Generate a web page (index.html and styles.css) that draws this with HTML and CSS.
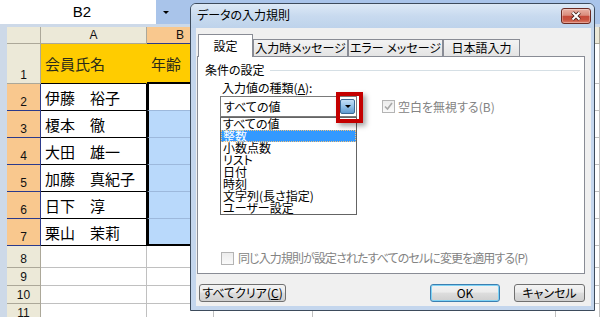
FILE: index.html
```html
<!DOCTYPE html>
<html lang="ja">
    <head>
        <meta charset="utf-8" />
        <title>データの入力規則</title>
        <link rel="stylesheet" href="styles.css">
    </head>
    <body>
        <div class="namebar">
            <div class="namebox">B2</div>
            <div class="namedrop"><span class="tri"></span></div>
        </div>

        <div class="sheet">
            <div class="corner"></div><div class="ch">A</div><div class="ch on">B</div><div class="ch">C</div><div class="ch">D</div><div class="ch">E</div>

            <div class="rh">1</div><div class="c yel a1">会員氏名</div><div class="c yel b1">年齢</div><div class="c"></div><div class="c"></div><div class="c"></div>
            <div class="rh on">2</div><div class="c name">伊藤　裕子</div><div class="c pick act"></div><div class="c"></div><div class="c"></div><div class="c"></div>
            <div class="rh on">3</div><div class="c name">榎本　徹</div><div class="c pick"></div><div class="c"></div><div class="c"></div><div class="c"></div>
            <div class="rh on">4</div><div class="c name">大田　雄一</div><div class="c pick"></div><div class="c"></div><div class="c"></div><div class="c"></div>
            <div class="rh on">5</div><div class="c name">加藤　真紀子</div><div class="c pick"></div><div class="c"></div><div class="c"></div><div class="c"></div>
            <div class="rh on">6</div><div class="c name">日下　淳</div><div class="c pick"></div><div class="c"></div><div class="c"></div><div class="c"></div>
            <div class="rh on">7</div><div class="c name">栗山　茉莉</div><div class="c pick last"></div><div class="c"></div><div class="c"></div><div class="c"></div>
            <div class="rh">8</div><div class="c"></div><div class="c"></div><div class="c"></div><div class="c"></div><div class="c"></div>
            <div class="rh">9</div><div class="c"></div><div class="c"></div><div class="c"></div><div class="c"></div><div class="c"></div>
            <div class="rh">10</div><div class="c"></div><div class="c"></div><div class="c"></div><div class="c"></div><div class="c"></div>
            <div class="rh">11</div><div class="c"></div><div class="c"></div><div class="c"></div><div class="c"></div><div class="c"></div>
        </div>

        <!-- 入力規則ダイアログ -->
        <div class="dialog">
            <div class="dlg-title">
                <span>データの入力規則</span>
                <span class="dlg-close">
                    <svg width="12" height="10" viewBox="0 0 12 10">
                        <path d="M2.5 1.5 9.5 8.5M9.5 1.5 2.5 8.5" stroke="#41201a" stroke-width="3.8" />
                        <path d="M2.5 1.5 9.5 8.5M9.5 1.5 2.5 8.5" stroke="#fff" stroke-width="2" />
                    </svg>
                </span>
            </div>

            <div class="dlg-body">
                <div class="tabs">
                    <div class="tab active tab-set">設定</div>
                    <div class="tab tab-msg">入力時メッセージ</div>
                    <div class="tab tab-err">エラー メッセージ</div>
                    <div class="tab tab-ime">日本語入力</div>
                </div>

                <div class="panel">
                    <div class="group-head"><span>条件の設定</span></div>

                    <div class="cond-row">
                        <div class="cond-left">
                            <div class="lbl">入力値の種類(<u>A</u>):</div>
                            <div class="combo">
                                <span>すべての値</span>
                                <span class="combo-btn"></span>
                                <span class="callout"></span>
                                <ul class="droplist">
                                    <li>すべての値</li>
                                    <li class="hl">整数</li>
                                    <li>小数点数</li>
                                    <li>リスト</li>
                                    <li>日付</li>
                                    <li>時刻</li>
                                    <li>文字列(長さ指定)</li>
                                    <li>ユーザー設定</li>
                                </ul>
                            </div>
                        </div>
                        <div class="check check-blank">
                            <span class="box">
                                <svg width="11" height="11" viewBox="0 0 11 11"><path d="M2 5.5 4.5 8 9 2" fill="none" stroke="#a8a8a8" stroke-width="1.6" /></svg>
                            </span>
                            空白を無視する(B)
                        </div>
                    </div>

                    <div class="check check-all">
                        <span class="box"></span>
                        <span class="narrow">同じ入力規則が設定されたすべてのセルに変更を適用する(P)</span>
                    </div>
                </div>

                <div class="btn-row">
                    <div class="btn btn-clear">すべてクリア(<u>C</u>)</div>
                    <div class="btn-right">
                        <div class="btn btn-ok">OK</div>
                        <div class="btn btn-cancel">キャンセル</div>
                    </div>
                </div>
            </div>
        </div>
    </body>
</html>
```

FILE: styles.css
```css
* {
    margin: 0;
    padding: 0;
    box-sizing: border-box;
}

body {
    position: relative;
    width: 600px;
    height: 317px;
    overflow: hidden;
    background: #cdd9e8;
    font-family: "Noto Sans CJK JP", sans-serif;
}

/* 名前ボックス */
.namebar {
    display: flex;
    height: 24px;
    margin-bottom: 3px;
    background: #a9c4ea;
}

.namebox {
    width: 156px;
    padding-left: 8px;
    background: #fff;
    font: 15px/24px "Liberation Sans", sans-serif;
    text-align: center;
}

.namedrop {
    display: flex;
    width: 34px;
    padding: 11px 0 0 7px;
}

.namedrop .tri {
    width: 0;
    height: 0;
    border-left: 3px solid transparent;
    border-right: 3px solid transparent;
    border-top: 3px solid #000;
}

/* シート */
.sheet {
    display: grid;
    grid-template-columns: 34px 106px 67px 99px 243px 1fr;
    grid-template-rows: 17px 40px repeat(6, 27px) 22px 18px 18px 18px;
    margin-left: 7px;
    background: #fff;
}

.sheet > div {
    border-right: 1px solid #c0c0c0;
    border-bottom: 1px solid #c0c0c0;
}

.sheet .corner,
.sheet .ch,
.sheet .rh {
    display: flex;
    justify-content: center;
    background: #ece9d8;
    border-color: #aca899;
    font: 12px/13px "Liberation Sans", sans-serif;
    color: #111;
}

.sheet .ch {
    align-items: center;
}

.sheet .rh {
    align-items: flex-end;
    padding-bottom: 1px;
}

.sheet .ch.on,
.sheet .rh.on {
    background: #f9c88e;
    border-bottom-color: #2b3a8c;
}

.sheet .rh.on {
    border-right-color: #2b3a8c;
}

.sheet .c {
    display: flex;
    align-items: center;
    padding-left: 4px;
    font-size: 15px;
    white-space: nowrap;
    overflow: hidden;
}

.sheet .yel {
    background: #ffcc00;
    border-color: #ffcc00;
    color: #2a2a1a;
}

.sheet .a1 {
    border-bottom-color: #000;
}

.sheet .b1 {
    border-bottom: 2px solid #000;
}

.sheet .name {
    border-color: #000;
}

/* 選択範囲 B2:B7 */
.sheet .pick {
    background: #b9d9fb;
    border-left: 2px solid #000;
    border-right: 2px solid #000;
    border-bottom-color: #9db9dc;
}

.sheet .pick.act {
    background: #fff;
}

.sheet .pick.last {
    border-bottom: 2px solid #000;
}

/* ダイアログ */
.dialog {
    position: absolute;
    left: 190px;
    top: 3px;
    display: flex;
    flex-direction: column;
    width: 405px;
    height: 308px;
    border: 1px solid #3d4b5c;
    border-radius: 6px 6px 0 0;
    background: #c4d6ed;
    font-size: 12px;
    font-feature-settings: "palt";
    color: #000;
}

.dlg-title {
    display: flex;
    align-items: center;
    justify-content: space-between;
    height: 24px;
    padding: 0 3px 2px 6px;
    border-radius: 5px 5px 0 0;
    background: linear-gradient(#dde9f6, #c8daef 50%, #bed3eb);
    line-height: 14px;
}

.dlg-close {
    display: flex;
    align-items: center;
    justify-content: center;
    width: 30px;
    height: 16px;
    margin-top: 2px;
    border: 1px solid #6b2a22;
    border-radius: 3px;
    background: linear-gradient(#eab2a5, #d98c7c 45%, #c54a3a 52%, #c8523f 75%, #dc7e69);
    box-shadow: inset 0 0 0 1px rgba(255, 255, 255, 0.3);
}

.dlg-body {
    flex: 1;
    margin: 0 3px 4px 5px;
    padding: 6px 6px 0 1px;
    background: #f0f0f0;
}

.tabs {
    display: flex;
    align-items: flex-end;
    height: 22px;
    margin-left: 1px;
}

.tab {
    display: flex;
    align-items: center;
    justify-content: center;
    height: 17px;
    border: 1px solid #898c95;
    border-bottom: 0;
    background: linear-gradient(#f3f3f3, #e4e4e4);
    line-height: 14px;
}

.tab.active {
    position: relative;
    z-index: 1;
    height: 23px;
    margin-bottom: -1px;
    background: #fff;
}

.tab-set { width: 55px; }
.tab-msg { width: 95px; }
.tab-err { width: 95px; }
.tab-ime { width: 77px; }

.panel {
    display: flex;
    flex-direction: column;
    height: 218px;
    padding: 6px 4px 8px 7px;
    border: 1px solid #898c95;
    background: #fff;
}

.group-head {
    display: flex;
    align-items: center;
    gap: 5px;
    line-height: 14px;
}

.group-head::after {
    content: "";
    flex: 1;
    border-top: 1px solid #d5dfe5;
}

.cond-row {
    display: flex;
    align-items: flex-end;
    margin-top: 4px;
    padding-left: 15px;
}

.lbl {
    margin-bottom: 1px;
    padding-left: 2px;
    line-height: 14px;
}

.combo {
    position: relative;
    display: flex;
    align-items: center;
    justify-content: space-between;
    width: 137px;
    height: 21px;
    padding: 0 1px 0 3px;
    border: 1px solid #7a7a7a;
    background: #fff;
    line-height: 14px;
}

.combo-btn {
    display: flex;
    align-items: center;
    justify-content: center;
    width: 15px;
    height: 15px;
    border: 1px solid #3b6a96;
    border-radius: 2px;
    background: linear-gradient(#c4e0f7, #92c1e8 50%, #5f9bd0);
}

.combo-btn::after {
    content: "";
    border-left: 3px solid transparent;
    border-right: 3px solid transparent;
    border-top: 3px solid #000;
}

.callout {
    position: absolute;
    left: 115px;
    top: -5px;
    z-index: 2;
    width: 27px;
    height: 31px;
    border: 4px solid #c40000;
    box-shadow: 3px 3px 5px rgba(0, 0, 0, 0.35);
}

.droplist {
    position: absolute;
    left: -1px;
    top: 20px;
    z-index: 1;
    width: 137px;
    border: 1px solid #646464;
    background: #fff;
    list-style: none;
}

.droplist li {
    height: 12px;
    padding-left: 2px;
    line-height: 12px;
    white-space: nowrap;
}

.droplist li.hl {
    background: #3399ff;
    color: #fff;
    outline: 1px dotted #f2c27c;
    outline-offset: -1px;
}

.check {
    display: flex;
    align-items: center;
    gap: 3px;
    color: #838383;
    line-height: 14px;
    white-space: nowrap;
}

.check-blank {
    height: 21px;
    margin-left: 25px;
}

.check-all {
    margin-top: auto;
    margin-left: 16px;
    gap: 4px;
}

.check-all .narrow {
    letter-spacing: -0.9px;
}

.box {
    display: flex;
    align-items: center;
    justify-content: center;
    width: 13px;
    height: 13px;
    border: 1px solid #b4b4b4;
    background: linear-gradient(#ececec, #fafafa);
}

.btn-row {
    display: flex;
    justify-content: space-between;
    margin-top: 10px;
    padding-left: 2px;
}

.btn-right {
    display: flex;
    gap: 14px;
}

.btn {
    display: flex;
    align-items: center;
    justify-content: center;
    height: 18px;
    border: 1px solid #707070;
    border-radius: 3px;
    background: linear-gradient(#f3f3f3, #ebebeb 45%, #dddddd 50%, #cfcfcf);
    line-height: 14px;
}

.btn-clear { width: 87px; }
.btn-cancel { width: 71px; }

.btn-ok {
    width: 70px;
    border-color: #3c7fb1;
    box-shadow: inset 0 0 0 1px #7fd3f5;
}
```
